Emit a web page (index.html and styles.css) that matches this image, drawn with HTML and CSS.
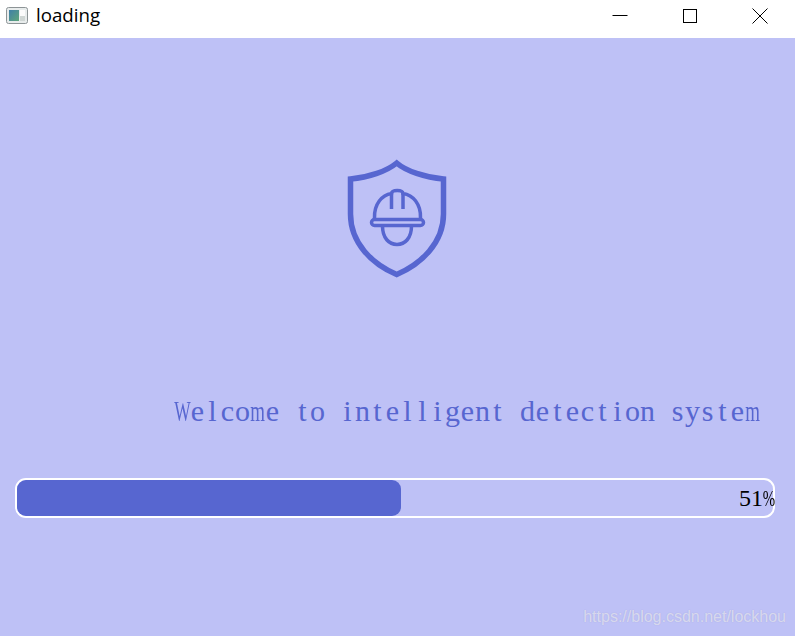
FILE: index.html
```html
<!DOCTYPE html>
<html lang="en">
<head>
<meta charset="utf-8">
<title>loading</title>
<link rel="stylesheet" href="styles.css">
</head>
<body>
<div class="window">
  <header class="titlebar">
    <svg class="app-icon" viewBox="0 0 22 17" width="22" height="17" aria-hidden="true">
      <defs>
        <linearGradient id="appgrad" x1="0" y1="0" x2="1" y2="1">
          <stop offset="0" stop-color="#3f7fa8"/>
          <stop offset="1" stop-color="#5fa67a"/>
        </linearGradient>
      </defs>
      <rect x="0.5" y="0.5" width="21" height="16" rx="2" fill="#e8ecec" stroke="#8d9496"/>
      <rect x="3" y="3" width="10" height="11" fill="url(#appgrad)"/>
      <rect x="14" y="3" width="5" height="6" fill="#fbfbfb"/>
      <rect x="14" y="9" width="5" height="5" fill="#cfd6d4"/>
    </svg>
    <span class="title">loading</span>
    <div class="controls">
      <button class="ctl" type="button" aria-label="Minimize">
        <svg viewBox="0 0 16 16" width="16" height="16"><path d="M0.5 7.5H15.5" stroke="#000" fill="none"/></svg>
      </button>
      <button class="ctl" type="button" aria-label="Maximize">
        <svg viewBox="0 0 16 16" width="16" height="16"><rect x="1.5" y="1.5" width="13" height="13" stroke="#000" fill="none"/></svg>
      </button>
      <button class="ctl" type="button" aria-label="Close">
        <svg viewBox="0 0 16 16" width="16" height="16"><path d="M0.5 0.5L15.5 15.5M15.5 0.5L0.5 15.5" stroke="#000" fill="none"/></svg>
      </button>
    </div>
  </header>
  <main class="content">
    <svg class="shield" viewBox="346 158 102 121" width="102" height="121" aria-hidden="true">
      <g fill="none" stroke="#5766d0">
        <path stroke-width="5.500" d="M396.700 163C387 171 369 177.500 350.500 179V214C350.500 243 372 264 396.700 274.500C421 264 443.500 243 443.500 214V179C425 177.500 406 171 396.700 163Z"/>
        <path stroke-width="3.500" d="M374.500 218C374 204 382 195 391.500 193.500C392 189.500 402.500 189.500 403 193.500C413 195 421 204 420.500 218"/>
        <path stroke-width="3.500" d="M391.500 193V209M403 193V209"/>
        <rect stroke-width="3.500" x="371.500" y="219.500" width="52" height="6" rx="3"/>
        <path stroke-width="3.500" d="M382.500 226C382.500 238 389 244.500 397 244.500C405 244.500 411.500 238 411.500 226"/>
      </g>
    </svg>
    <p class="welcome"><span class="ch wide-w">W</span><span class="ch">e</span><span class="ch">l</span><span class="ch">c</span><span class="ch">o</span><span class="ch wide-m">m</span><span class="ch">e</span><span class="ch"> </span><span class="ch">t</span><span class="ch">o</span><span class="ch"> </span><span class="ch">i</span><span class="ch">n</span><span class="ch">t</span><span class="ch">e</span><span class="ch">l</span><span class="ch">l</span><span class="ch">i</span><span class="ch">g</span><span class="ch">e</span><span class="ch">n</span><span class="ch">t</span><span class="ch"> </span><span class="ch">d</span><span class="ch">e</span><span class="ch">t</span><span class="ch">e</span><span class="ch">c</span><span class="ch">t</span><span class="ch">i</span><span class="ch">o</span><span class="ch">n</span><span class="ch"> </span><span class="ch">s</span><span class="ch">y</span><span class="ch">s</span><span class="ch">t</span><span class="ch">e</span><span class="ch wide-m">m</span></p>
    <div class="progress">
      <div class="progress-fill" style="width:50.8%"></div>
      <span class="progress-label"><span class="digit">5</span><span class="digit">1</span><span class="digit pct">%</span></span>
    </div>
  </main>
  <span class="watermark">https://blog.csdn.net/lockhou</span>
</div>
</body>
</html>
```
FILE: styles.css
```css
html, body {
  margin: 0;
  padding: 0;
}
body {
  width: 795px;
  height: 636px;
  overflow: hidden;
}
.window {
  position: relative;
  display: flex;
  flex-direction: column;
  height: 636px;
  background: #bec1f6;
}
.titlebar {
  display: flex;
  align-items: center;
  height: 38px;
  flex: none;
  background: #fff;
  padding-left: 6px;
  box-sizing: border-box;
}
.app-icon {
  flex: none;
  margin-top: -7px;
}
.title {
  margin-left: 8px;
  margin-top: -8px;
  font: 18.700px/24px "Open Sans", "Noto Sans", sans-serif;
  color: #000;
}
.controls {
  display: flex;
  margin-left: auto;
  margin-top: -6px;
}
.ctl {
  width: 70px;
  height: 30px;
  border: 0;
  padding: 0;
  background: none;
  display: flex;
  align-items: center;
  justify-content: center;
}
.content {
  flex: 1;
  display: flex;
  flex-direction: column;
  padding: 120px 20px 0 15px;
  box-sizing: border-box;
}
.shield {
  align-self: center;
  display: block;
  margin-left: 3px;
  filter: blur(0.4px);
}
.welcome {
  margin: 115px 15px 0 0;
  height: 34px;
  font: 30px/34px "Liberation Serif", serif;
  color: #5766d0;
  display: flex;
  justify-content: flex-end;
  white-space: pre;
}
.ch {
  width: 15px;
  flex: none;
  display: flex;
  justify-content: center;
}
.wide-w {
  transform: scaleX(0.58);
}
.wide-m {
  transform: scaleX(0.63);
}
.progress {
  position: relative;
  margin-top: 50px;
  height: 40px;
  box-sizing: border-box;
  border: 2px solid #fff;
  border-radius: 11px;
}
.progress-fill {
  height: 100%;
  background: #5766d0;
  border-radius: 9px;
}
.progress-label {
  position: absolute;
  right: -2px;
  top: 4px;
  display: flex;
  font: 24px/28px "Liberation Serif", serif;
  color: #000;
}
.digit {
  width: 12px;
  flex: none;
  display: flex;
  justify-content: center;
}
.pct {
  transform: scaleX(0.62);
}
.watermark {
  position: absolute;
  right: 9px;
  bottom: 9px;
  font: 16px/20px "Liberation Sans", sans-serif;
  color: rgba(255, 255, 255, 0.55);
  text-shadow: 0 0 1px rgba(90, 90, 120, 0.25);
}
```
